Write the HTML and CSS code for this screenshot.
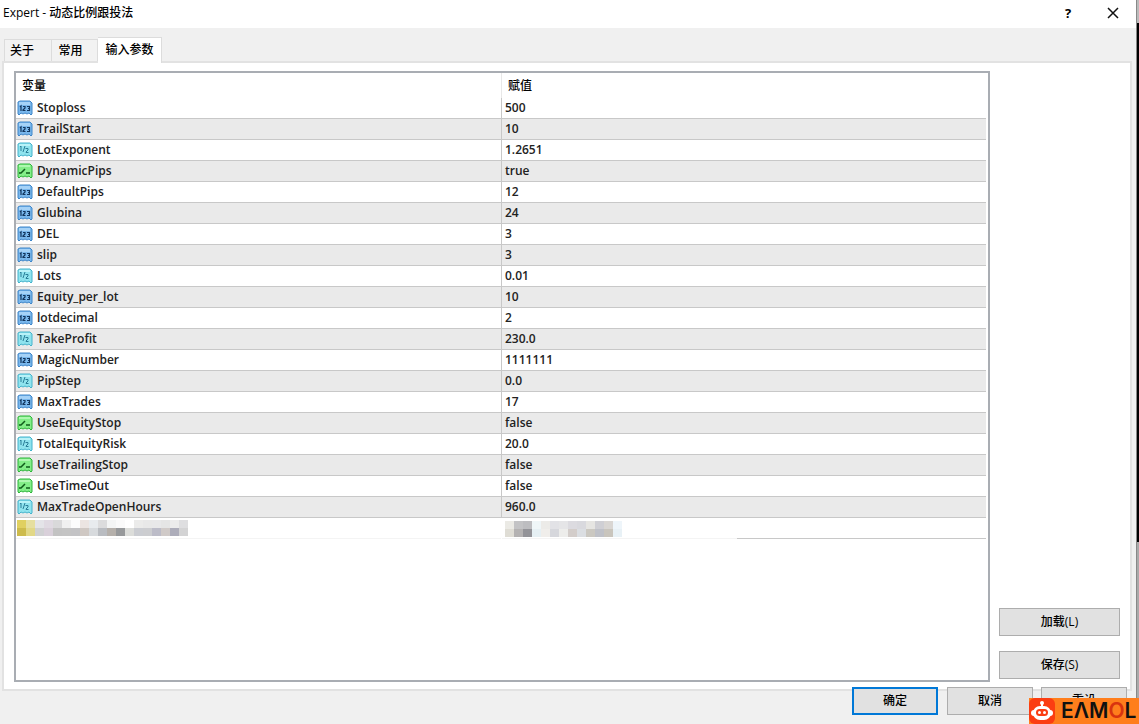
FILE: index.html
```html
<!DOCTYPE html>
<html lang="zh-CN">
<head>
    <meta charset="UTF-8">
    <meta name="viewport" content="width=device-width, initial-scale=1.0">
    <title>Expert - 动态比例跟投法</title>
    <link rel="stylesheet" href="styles.css">
</head>
<body>

    <!-- icons -->
    <svg class="sprite" width="0" height="0">
        <symbol id="i-int" viewBox="0 0 16 16">
            <path d="M1 2L3 1H13L14 2L15 3V14L14 15L12 13L10 14L8 13L6 14L4 13L2 15L1 14Z" fill="#79b7ec" stroke="#3f86c9"/>
            <path d="M2 2H13V5H2Z" fill="#a5d2f7"/>
            <path d="M3 7L4 6V11M6 6.500H8V8L6 10V10.500H8.500M10 6.500H12.500V10.500H10M11 8.500H12.500" fill="none" stroke="#12365f" stroke-width="1.200"/>
        </symbol>
        <symbol id="i-double" viewBox="0 0 16 16">
            <path d="M1 2L3 1H13L14 2L15 3V14L14 15L12 13L10 14L8 13L6 14L4 13L2 15L1 14Z" fill="#8fe3ee" stroke="#45b3cc"/>
            <path d="M2 2H13V4H2Z" fill="#b9f2f8"/>
            <path d="M3 5L4 4V9M8 4L6 10M8.500 6.500H11V8L9 10V10.500H11.500" fill="none" stroke="#2b7e98"/>
        </symbol>
        <symbol id="i-bool" viewBox="0 0 16 16">
            <path d="M1 2L3 1H13L14 2L15 3V14L14 15L12 13L10 14L8 13L6 14L4 13L2 15L1 14Z" fill="#83ee88" stroke="#2fb53c"/>
            <path d="M2 2H13V4H2Z" fill="#aef8b0"/>
            <path d="M2 10H4L8 6M9 10H13" fill="none" stroke="#0f5c1a" stroke-width="1.500"/>
        </symbol>
    </svg>

    <div class="dialog">
        <div class="titlebar">
            <h1>Expert - 动态比例跟投法</h1>
            <button class="tool help" type="button" aria-label="Help">?</button>
            <button class="tool close" type="button" aria-label="Close">
                <svg width="12" height="12" viewBox="0 0 12 12"><path d="M1 1L11 11M11 1L1 11" stroke="#111" stroke-width="1.500"/></svg>
            </button>
        </div>

        <div class="tabs" role="tablist">
            <button class="tab" type="button" role="tab">关于</button>
            <button class="tab" type="button" role="tab">常用</button>
            <button class="tab active" type="button" role="tab" aria-selected="true">输入参数</button>
        </div>

        <div class="panel">
            <div class="list">
                <table>
                    <thead>
                        <tr><th>变量</th><th>赋值</th></tr>
                    </thead>
                    <tbody id="params"></tbody>
                </table>
            </div>
            <div class="side">
                <button class="btn" type="button">加载(L)</button>
                <button class="btn" type="button">保存(S)</button>
            </div>
        </div>

        <div class="footer">
            <button class="btn primary" type="button">确定</button>
            <button class="btn" type="button">取消</button>
            <button class="btn" type="button">重设</button>
        </div>
    </div>
    <div class="behind"></div>

    <div class="brand">
        <svg width="26" height="26" viewBox="0 0 26 26">
            <rect width="26" height="26" rx="6" fill="#fb3d12"/>
            <circle cx="13" cy="5" r="2" fill="#fff"/>
            <path d="M13 5V9" stroke="#fff" stroke-width="2"/>
            <rect x="2" y="12" width="22" height="6" rx="3" fill="#fff"/>
            <rect x="4" y="8" width="18" height="14" rx="7" fill="#fff"/>
            <rect x="7" y="11" width="12" height="7" rx="3.500" fill="#fb3d12"/>
            <circle cx="10.500" cy="14.500" r="1.500" fill="#fff"/>
            <circle cx="15.500" cy="14.500" r="1.500" fill="#fff"/>
        </svg>
        <span class="wordmark">EΛM<span class="ring">O</span>L</span>
    </div>

    <script src="script.js"></script>
</body>
</html>
```
FILE: styles.css
```css
* {
    box-sizing: border-box;
}

body {
    margin: 0;
    min-height: 100vh;
    display: flex;
    overflow: hidden;
    background-color: #f0f0f0;
    color: #000;
    font-family: "Open Sans", "Noto Sans CJK SC", sans-serif;
    font-size: 12px;
    font-weight: 500;
    line-height: 20px;
}

button {
    font: inherit;
    color: inherit;
    padding: 0;
}

.sprite {
    position: absolute;
}

.dialog {
    flex: 1;
    display: flex;
    flex-direction: column;
}

/* strip of the chart window behind the dialog */
.behind {
    width: 3px;
    border-left: 1px solid #888;
    background: linear-gradient(#bbb 23px, #000 23px, #000 542px, #aaa 542px);
}

.titlebar {
    height: 28px;
    display: flex;
    align-items: center;
    padding: 0 13px 2px 3px;
    background-color: #fff;
}

.titlebar h1 {
    flex: 1;
    margin: 0;
    font-size: 12px;
    font-weight: 500;
}

.tool {
    width: 20px;
    border: none;
    background: none;
}

.tool svg {
    display: block;
    margin: 0 auto;
}

.help {
    margin-right: 25px;
    font-size: 13px;
    font-weight: 700;
}

.tabs {
    display: flex;
    align-items: flex-end;
    height: 33px;
    padding-left: 4px;
}

.tab {
    width: 48px;
    height: 22px;
    padding-right: 12px;
    border: 1px solid #dcdcdc;
    border-bottom: none;
    background-color: #f2f2f2;
}

.tab + .tab {
    border-left: none;
    width: 46px;
    padding-right: 8px;
}

.tab.active {
    width: 64px;
    height: 26px;
    padding: 0 0 2px;
    margin-bottom: -2px;
    position: relative;
    background-color: #fff;
}

.panel {
    flex: 1;
    display: flex;
    gap: 9px;
    margin: 0 4px 0 2px;
    padding: 8px 10px 7px 10px;
    border: 2px solid #e2e2e2;
    background-color: #fff;
}

.list {
    flex: 1;
    border: 2px solid #a9adb3;
    padding-right: 2px;
}

table {
    width: 100%;
    table-layout: fixed;
    border-collapse: separate;
    border-spacing: 0;
}

th {
    height: 25px;
    padding: 0 6px;
    text-align: left;
    font-weight: 500;
}

th + th {
    border-left: 1px solid #e8e8e8;
}

td {
    height: 21px;
    padding: 0 3px;
    border-bottom: 1px solid #c8c8c8;
}

td + td {
    border-left: 1px solid #c8c8c8;
}

th:first-child {
    width: 50%;
}

td:first-child {
    padding-left: 1px;
}

tbody {
    font-weight: 600;
    color: #222;
}

tbody tr:nth-child(even) {
    background-color: #eaeaea;
}

.name {
    display: flex;
    align-items: center;
    gap: 4px;
}

.mosaic {
    display: block;
}

.censored td {
    border-left-color: transparent;
    border-bottom-color: #f4f4f4;
}

.censored td + td {
    border-bottom: none;
    background: linear-gradient(90deg, #f4f4f4 235px, #c8c8c8 235px) left bottom / 100% 1px no-repeat;
}

.side {
    width: 121px;
    display: flex;
    flex-direction: column;
    justify-content: flex-end;
    gap: 15px;
    padding-bottom: 3px;
}

.btn {
    height: 28px;
    border: 1px solid #adadad;
    background-color: #e1e1e1;
}

.footer {
    display: flex;
    justify-content: flex-end;
    gap: 8px;
    height: 37px;
    margin-top: -4px;
    padding-right: 9px;
}

.footer .btn {
    width: 86px;
}

.footer .primary {
    border: 2px solid #0078d7;
    margin-right: 1px;
}

.brand {
    position: absolute;
    right: 0;
    bottom: 0;
    width: 110px;
    height: 26px;
    display: flex;
    align-items: center;
    gap: 6px;
    background-color: #ff7e1c;
}

.wordmark {
    font-family: Inter, sans-serif;
    font-size: 21px;
    font-weight: 600;
    color: #111;
}

.ring {
    color: #d8330f;
}
```
FILE: script.js
```js
const params = [
    ['int', 'Stoploss', '500'],
    ['int', 'TrailStart', '10'],
    ['double', 'LotExponent', '1.2651'],
    ['bool', 'DynamicPips', 'true'],
    ['int', 'DefaultPips', '12'],
    ['int', 'Glubina', '24'],
    ['int', 'DEL', '3'],
    ['int', 'slip', '3'],
    ['double', 'Lots', '0.01'],
    ['int', 'Equity_per_lot', '10'],
    ['int', 'lotdecimal', '2'],
    ['double', 'TakeProfit', '230.0'],
    ['int', 'MagicNumber', '1111111'],
    ['double', 'PipStep', '0.0'],
    ['int', 'MaxTrades', '17'],
    ['bool', 'UseEquityStop', 'false'],
    ['double', 'TotalEquityRisk', '20.0'],
    ['bool', 'UseTrailingStop', 'false'],
    ['bool', 'UseTimeOut', 'false'],
    ['double', 'MaxTradeOpenHours', '960.0']
];

// censored row, two lines of 9px blocks per cell
const nameBlocks = [
    ['#e0d060', '#e6dfa0', '#e4e4e8', '#e0dae2', '#d9d9da', '#f0f0f0', '#fcfcfc', '#ece5e2', '#e8ebee', '#dcdcdd', '#f4f5f5', '#fafafa', '#ffffff', '#ebebea', '#e8e8e8', '#e8e8e9', '#e5e5e5', '#ececec', '#dedee0'],
    ['#cdbb4c', '#e2d887', '#d0d1d3', '#d9d0da', '#c3c3c3', '#c4c4c4', '#c3c3c5', '#cfc8c3', '#d7dadd', '#b9bcc1', '#b5b0ab', '#97999b', '#dcddda', '#cbcdd2', '#cccdd0', '#bcbcc8', '#d0cac8', '#adadba', '#d3d3d4']
];
const valueBlocks = [
    ['#ebeae5', '#c3c3c5', '#bdbdc0', '#eff6f8', '#ecebe8', '#e2e2e6', '#e5e5e7', '#dcdbe0', '#d9d9de', '#e6e5e2', '#cfcfd4', '#d9d6d3', '#eef5fa'],
    ['#dfddd5', '#b4b2b2', '#939398', '#e6f0f4', '#f0eeeb', '#d6d7dc', '#ededeb', '#d3cdca', '#dbdee2', '#cbc8c1', '#bfc1c8', '#c9c5bd', '#e8f1f6']
];

function mosaic(rows) {
    let rects = '';
    rows.forEach((row, y) => {
        row.forEach((color, x) => {
            rects += `<rect x="${x * 9}" y="${y * 8}" width="9" height="8" fill="${color}"/>`;
        });
    });
    return `<svg class="mosaic" width="${rows[0].length * 9}" height="16">${rects}</svg>`;
}

let html = '';
params.forEach(([type, name, value]) => {
    html += `<tr><td><div class="name"><svg width="16" height="16"><use href="#i-${type}"/></svg>${name}</div></td><td>${value}</td></tr>`;
});
html += `<tr class="censored"><td>${mosaic(nameBlocks)}</td><td>${mosaic(valueBlocks)}</td></tr>`;
document.getElementById('params').innerHTML = html;
```
